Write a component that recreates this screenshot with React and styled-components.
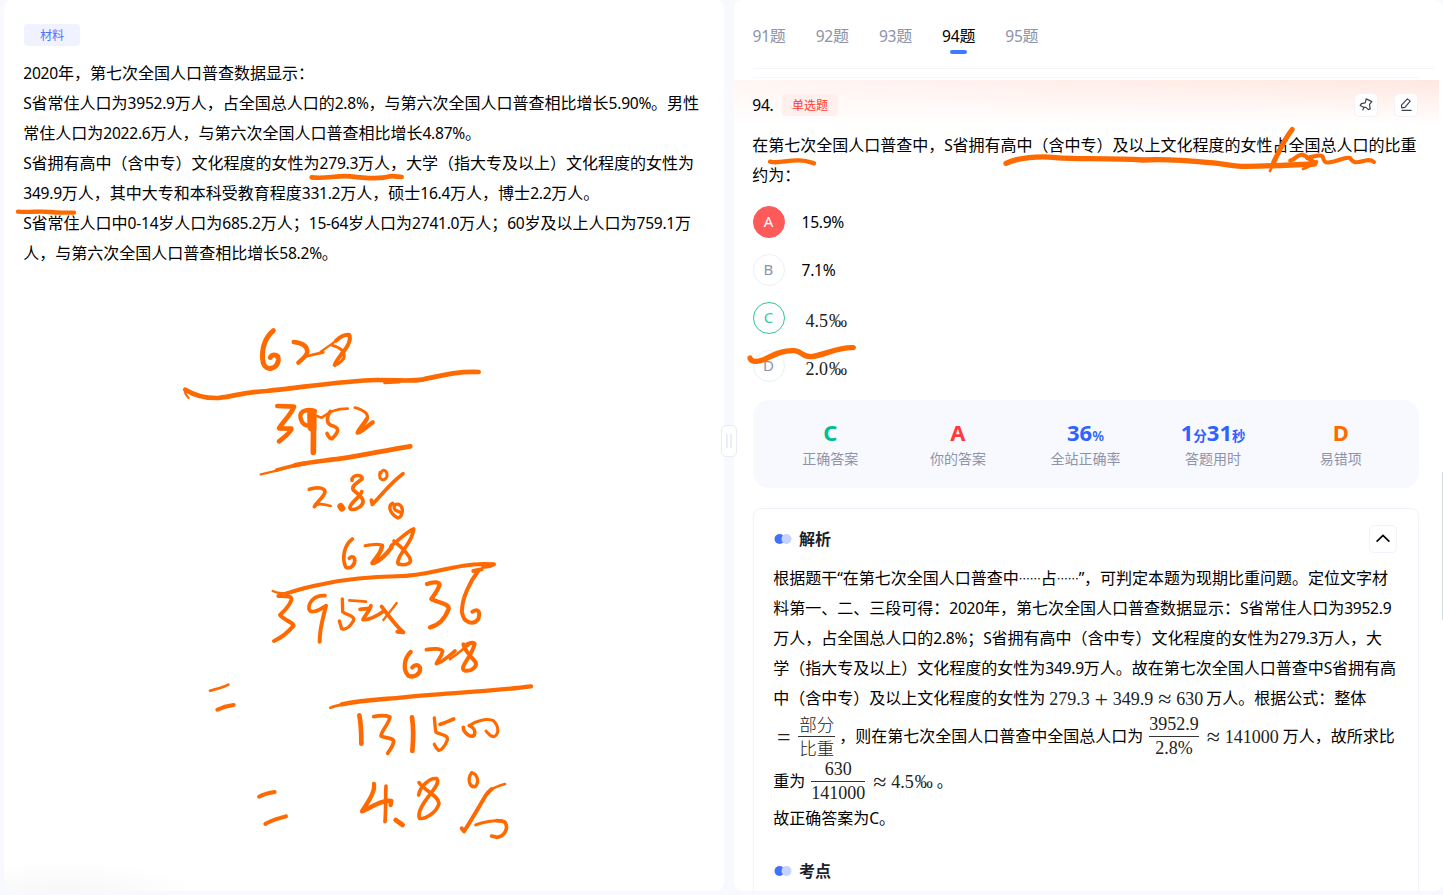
import React from "react";
import styled, { createGlobalStyle } from "styled-components";

const GlobalStyle = createGlobalStyle`
  * { box-sizing: border-box; }
  body {
    margin: 0;
    background: #f7f9fe;
    color: #000;
    font-family: "Noto Sans CJK SC", sans-serif;
    font-size: 16px;
    overflow: hidden;
  }
`;

const INK = "#ff6a00";

const Page = styled.main`
  position: relative;
  display: flex;
  width: 100vw;
  height: 895px;
  padding: 0 0 4px 4px;
  overflow: hidden;
`;

const Panel = styled.section`
  width: ${(p) => p.$width};
  flex: ${(p) => (p.$width ? "none" : 1)};
  height: 891px;
  background: #fff;
  border-radius: 8px;
  overflow: hidden;
`;

const Material = styled(Panel)`
  padding: 24px 20px;
  background: radial-gradient(ellipse 130px 30px at 60px 100%, #f7f7f8, #fff);
`;

const Tag = styled.span`
  display: flex;
  align-items: center;
  justify-content: center;
  width: 56px;
  height: 22px;
  border-radius: 4px;
  font-size: 12px;
  line-height: 22px;
  color: ${(p) => (p.$red ? "#ff3b30" : "#4476ff")};
  background: ${(p) => (p.$red ? "#fff0ed" : "#f0f3ff")};
`;

const Passage = styled.div`
  margin: ${(p) => p.$top || 0}px 0 0 -0.7px;
`;

const Line = styled.div`
  display: flex;
  align-items: center;
  height: ${(p) => p.$h || 30}px;
  line-height: 30px;
  white-space: pre;
`;

const Latin = styled.span`
  font-family: "Noto Sans", sans-serif;
  font-size: 0.975em;
  letter-spacing: -0.28px;
`;

const Dots = styled.span`
  font-size: 11px;
  font-weight: 500;
  vertical-align: 1px;
  line-height: 1;
`;

function Text({ children }) {
  const runs = children.split(/([\x20-\x7e“”]+|…+)/).filter(Boolean);
  return (
    <span>
      {runs.map((run, i) => {
        if (/^…/.test(run)) return <Dots key={i}>{run}</Dots>;
        if (/^[\x20-\x7e“”]/.test(run)) return <Latin key={i}>{run}</Latin>;
        return run;
      })}
    </span>
  );
}

const Splitter = styled.div`
  display: flex;
  align-items: center;
  justify-content: center;
  width: 10px;
  flex: none;
`;

const Grip = styled.div`
  z-index: 1;
  flex: none;
  display: flex;
  align-items: center;
  justify-content: center;
  gap: 2px;
  width: 16px;
  height: 32px;
  margin-top: -9px;
  border: 1px solid #e9ebf5;
  border-radius: 5px;
  background: #fff;
`;

const GripBar = styled.i`
  width: 2px;
  height: 14px;
  background: #eceef5;
`;

const Tabs = styled.nav`
  display: flex;
  gap: 30px;
  height: 69px;
  margin: 0 9px 0 18.6px;
  padding-top: 21px;
  border-bottom: 1px solid #f3f4fb;
`;

const Tab = styled.div`
  display: flex;
  flex-direction: column;
  align-items: center;
  width: 33.2px;
  line-height: 29px;
  color: ${(p) => (p.$active ? "#000" : "#8d94aa")};
  white-space: nowrap;

  &::after {
    content: "";
    width: 17px;
    height: 4px;
    margin-top: -1px;
    border-radius: 2px;
    background: ${(p) => (p.$active ? "#3f7bff" : "transparent")};
  }
`;

const Rule = styled.div`
  height: 1px;
  margin: 8px 24px 2px 19px;
  background: #f5f6fb;
`;

const Question = styled.div`
  margin-right: 4px;
  padding: 13px 20px 0 19px;
  background: linear-gradient(to bottom, rgba(255, 255, 255, 0), #fff 44px),
    linear-gradient(100deg, #fff6f3, #ffede9 45%, #ffe5dc);
`;

const QuestionHead = styled.header`
  display: flex;
  align-items: center;
  height: 24px;
`;

const Number = styled.span`
  width: 29.7px;
  margin-left: -0.7px;
  padding-bottom: 2px;
`;

const Tools = styled.div`
  display: flex;
  gap: 16px;
  margin: 0 1px 0 auto;
`;

const IconButton = styled.button`
  display: grid;
  place-items: center;
  width: ${(p) => p.$size || 24}px;
  height: ${(p) => p.$size || 24}px;
  padding: 0;
  border: 1px solid #f1f2fb;
  border-radius: 5px;
  background: #fff;
`;

const Options = styled.div`
  display: flex;
  flex-direction: column;
  gap: 16px;
  margin-top: 17px;
`;

const Option = styled.div`
  display: flex;
  align-items: center;
  gap: 16.5px;
  height: 32px;
  line-height: 28px;
`;

const OptionText = styled.div`
  padding-bottom: 2px;
`;

const tones = {
  wrong: ["#ff5a5a", "#fff", "#ff5a5a"],
  right: ["#fff", "#3cc8a3", "#2fc6a0"],
  plain: ["#fff", "#8d94aa", "#ebeff9"],
};

const Letter = styled.span`
  display: grid;
  place-items: center;
  width: 32px;
  height: 32px;
  padding: 0 1px 2px 0;
  border-radius: 50%;
  border: 1px solid ${(p) => tones[p.$tone][2]};
  background: ${(p) => tones[p.$tone][0]};
  color: ${(p) => tones[p.$tone][1]};
  font: 15px/28px "Noto Sans", sans-serif;
`;

const Formula = styled.span`
  display: inline-flex;
  align-items: center;
  font: 18px/24px "Liberation Serif", "Noto Sans CJK SC", serif;
  color: #222;
  padding-top: ${(p) => p.$drop ?? 2}px;
  margin: 0 ${(p) => p.$right ?? 3}px 0 ${(p) => p.$left ?? 4}px;
`;

const Op = styled.span`
  width: 14px;
  margin: 0 4.5px;
  text-align: center;
  font-size: 24px;
  line-height: 20px;
`;

const Permille = styled.span`
  width: 20px;
  padding-left: 1px;
`;

const Fraction = styled.span`
  display: inline-flex;
  flex-direction: column;
  align-items: stretch;
  text-align: center;
  line-height: 23px;
  margin: 0 ${(p) => p.$right ?? 3}px 0 ${(p) => p.$left ?? 0}px;
`;

const Numerator = styled.span`
  border-bottom: 1px solid #333;
`;

const Han = styled.span`
  display: block;
  height: 23px;
  padding: 0 1px;
  font-family: "Noto Sans CJK SC", sans-serif;
  font-weight: 300;
  font-size: 17.5px;
  line-height: 22px;
`;

const Stats = styled.div`
  display: grid;
  grid-template-columns: repeat(5, 1fr);
  height: 88px;
  margin-top: 18px;
  padding: 17px 14.5px 0 13.5px;
  border-radius: 16px;
  background: #f7f9fe;
`;

const Stat = styled.div`
  display: flex;
  flex-direction: column;
  align-items: center;
`;

const Value = styled.div`
  height: 30px;
  font: 700 22px/30px "Noto Sans", "Noto Sans CJK SC", sans-serif;
  color: ${(p) => p.$color};
`;

const Unit = styled.small`
  font-size: 13.5px;
  font-weight: 600;
  line-height: 1;
`;

const Label = styled.div`
  font-size: 14px;
  line-height: 22px;
  color: #8d94aa;
`;

const Card = styled.article`
  height: 420px;
  margin-top: 20px;
  padding: 16px 21px 0 20px;
  border: 1px solid #f1f2fb;
  border-radius: 8px;
`;

const CardHead = styled.header`
  display: flex;
  align-items: center;
  justify-content: space-between;
  height: 28px;
  margin-top: ${(p) => p.$top || 0}px;
`;

const Title = styled.h3`
  display: flex;
  align-items: center;
  gap: 7px;
  margin: 0;
  font-size: 16px;
  line-height: 26px;
  font-weight: 700;
  color: #1b1f2b;
`;

const TitleText = styled.span`
  padding-bottom: 2px;
`;

const Scrollbar = styled.div`
  position: absolute;
  right: 0;
  top: 472px;
  width: 1px;
  height: 148px;
  background: #d9dbe3;
`;

const InkLayer = styled.svg`
  position: absolute;
  inset: 0;
  pointer-events: none;
  z-index: 2;
`;

function PinIcon() {
  return (
    <svg width="14" height="14" viewBox="0 0 14 14" fill="none" stroke="#3f434e" strokeWidth="1.2" strokeLinejoin="round" strokeLinecap="round">
      <path d="M7.2 0.9 L12.8 3.6 L10.5 6.4 L11.2 10.9 L9.4 11.6 L6.9 9.4 L4.5 9.3 L1.2 7.4 L2.4 5.6 L6.2 4.8 Z" />
      <path d="M4.9 9.4 L3.8 12" />
    </svg>
  );
}

function PencilIcon() {
  return (
    <svg width="14" height="14" viewBox="0 0 14 14" fill="none" stroke="#3f434e" strokeWidth="1.2" strokeLinejoin="round" strokeLinecap="round">
      <path d="M8.4 0.9 L11.2 3.1 L5.9 9.4 L2.7 9.8 L2.5 7.2 Z" />
      <path d="M3 12.3 H12.2" />
    </svg>
  );
}

function TitleDots() {
  return (
    <svg width="18" height="10" viewBox="0 0 18 10">
      <circle cx="5.5" cy="5" r="5" fill="#4371ff" />
      <circle cx="12.5" cy="5" r="5" fill="#c6d3ff" />
    </svg>
  );
}

const strokes = [
  {
    at: [170, 310],
    paths: [
      [15, "M310 62C282 85 272 125 280 160C288 185 322 178 325 150C326 132 308 132 301 142"],
      [13, "M385 158C395 150 408 138 412 127C413 110 400 99 371 96"],
      [8, "M385 158C395 140 420 135 460 127"],
      [7, "M452 125C475 110 490 98 505 88"],
      [12, "M498 92C512 80 525 72 538 75C544 90 532 112 515 132C505 145 498 155 494 165"],
      [9, "M487 106C510 112 528 125 521 145C512 158 505 162 495 165"],
      [6, "M56 264C46 254 42 246 46 238"],
      [14, "M46 239C75 257 105 265 145 264C200 258 220 246 290 243C400 232 520 212 620 210C700 210 720 215 760 208C820 195 860 184 926 186"],
      [7, "M643 219L688 217"],
      [14, "M322 288L372 290C365 310 340 335 327 355L364 356C364 365 345 380 327 394"],
      [13, "M435 303C415 297 390 300 391 320C395 345 410 350 425 345"],
      [27, "M425 312L426 352"],
      [17, "M431 305L430 427"],
      [8, "M440 318L455 323C480 303 500 296 533 296"],
      [11, "M481 304C470 320 468 340 483 346C510 353 508 365 486 386C477 386 473 375 471 370"],
      [9, "M555 293C580 300 600 312 590 330"],
      [13, "M590 328C580 345 565 360 563 368C580 364 595 345 608 337"],
      [7, "M272 493C330 482 360 468 410 462"],
      [11, "M320 480C350 471 380 464 410 459"],
      [14, "M375 466C420 455 460 453 510 446C580 436 650 420 721 409"],
      [11, "M418 538C440 530 465 533 465 546C460 565 440 575 433 590"],
      [8, "M433 590C440 578 460 582 482 588"],
      [20, "M512 589L516 595"],
      [11, "M546 511C545 493 580 492 576 507C560 520 543 528 550 540C575 560 590 575 570 590C550 603 535 600 541 588C550 570 572 560 575 545"],
      [9, "M630 487C625 510 642 517 651 500C653 478 635 476 633 490"],
      [11, "M699 491C660 520 635 555 607 583L604 570"],
      [10, "M668 580C652 588 660 612 684 624C700 618 702 590 686 583C674 580 668 590 676 600L688 606"],
    ],
  },
  {
    at: [190, 515],
    paths: [
      [11, "M487 72C462 90 455 130 467 156C480 165 497 150 494 132C490 122 482 125 478 130"],
      [9, "M525 92C550 88 570 85 578 92"],
      [13, "M576 92C575 115 555 130 547 144C565 142 590 118 605 97"],
      [11, "M603 93C625 77 650 50 671 42C668 75 645 95 637 112C625 130 620 145 626 147"],
      [11, "M612 78C625 90 640 100 650 115C663 130 665 142 655 146C645 150 635 150 626 147"],
      [7, "M248 228C275 242 310 230 350 220"],
      [12, "M290 235C330 222 360 214 400 207C480 190 540 185 620 184C700 183 740 165 820 152C850 147 880 146 912 148C900 155 890 156 880 155"],
      [12, "M265 243C290 242 308 244 304 255C298 275 280 290 270 300C285 318 310 322 311 332C300 345 275 368 252 378"],
      [11, "M405 242C375 240 355 260 357 282C362 298 385 287 404 275"],
      [12, "M408 272C402 300 388 340 389 380"],
      [10, "M457 252L458 290C470 300 497 303 490 318C478 338 465 345 455 341L448 318"],
      [8, "M478 256L528 260"],
      [11, "M510 283C530 280 540 283 543 272C540 290 520 305 519 314C540 316 565 300 582 288"],
      [12, "M575 275C590 295 620 335 640 352L622 350"],
      [7, "M620 264C605 285 595 295 580 315"],
      [13, "M711 207C730 200 752 200 748 212C742 230 732 240 724 252C745 264 778 265 776 282C765 310 750 330 720 337"],
      [12, "M875 163L850 168"],
      [12, "M866 166C840 200 815 250 816 290C820 325 850 332 865 312C872 290 865 280 847 290"],
      [13, "M662 411C642 430 638 465 655 482C675 490 693 475 690 458C685 448 675 448 667 457"],
      [11, "M709 404C730 400 755 400 758 409C755 425 742 435 739 446C755 443 775 425 795 408"],
      [8, "M780 432C800 420 820 400 835 392"],
      [12, "M825 393C835 383 850 381 854 386C850 405 840 420 835 428C822 448 812 463 825 467C845 470 862 455 857 442C845 425 825 410 820 388"],
    ],
  },
  {
    at: [190, 670],
    paths: [
      [8, "M421 113C440 105 470 102 500 95"],
      [13, "M455 103C520 90 580 88 640 82C760 70 900 65 1023 49"],
      [8, "M60 62C80 56 100 53 115 44"],
      [12, "M82 119C100 110 115 107 131 105"],
      [14, "M508 136C513 160 514 190 514 221"],
      [11, "M551 140C570 136 590 137 600 141C595 165 575 180 573 198C590 206 613 203 611 216C607 235 598 240 593 250"],
      [14, "M666 142C672 180 670 210 667 243"],
      [10, "M733 144C735 160 735 175 738 187C755 195 775 195 772 210C765 230 752 243 746 241C740 237 736 230 733 223"],
      [11, "M750 163C765 160 778 152 791 147"],
      [11, "M820 172C820 190 845 205 853 195C858 183 850 172 838 167"],
      [9, "M838 167C860 150 890 145 910 152C928 170 927 193 912 200C900 200 895 190 888 183"],
      [12, "M207 380C222 372 240 368 254 366"],
      [12, "M226 462C245 450 265 446 288 439"],
      [13, "M552 342C556 365 535 395 516 424C545 412 575 388 604 393L602 405"],
      [11, "M588 348C586 385 588 420 585 455"],
      [14, "M617 450L638 465"],
      [11, "M687 338C700 360 745 375 747 400C740 430 700 450 688 444C682 425 700 400 715 380C735 355 750 335 740 326C720 322 690 350 686 375"],
      [10, "M845 308C830 330 840 352 855 350C870 337 862 312 845 308"],
      [8, "M945 342C920 350 900 355 885 378"],
      [12, "M905 357C895 366 892 369 888 375C870 405 845 450 822 484L815 475"],
      [9, "M857 465C880 455 920 448 945 456"],
      [11, "M920 452C930 452 940 453 945 457C957 475 943 500 920 502L905 498"],
    ],
  },
  {
    at: [715, 290],
    paths: [[16, "M105 204C108 215 125 218 148 208C185 190 205 181 238 182C262 184 260 201 288 200C330 195 370 170 415 173"]],
  },
  {
    at: [730, 0],
    paths: [[13, "M120 485C145 492 170 480 205 481C225 480 240 486 252 490"]],
  },
  {
    at: [0, 0],
    paths: [
      [14, "M935 532C975 538 1010 525 1050 529C1090 534 1140 538 1170 529C1185 527 1195 531 1205 531"],
      [13, "M54 635C90 638 120 632 150 636C180 640 200 637 222 638"],
    ],
  },
  {
    at: [1083, 0],
    paths: [
      [16, "M-231 490C-195 472 -130 468 -90 472C-40 478 60 474 180 480C260 476 320 482 380 488C430 492 460 500 490 499C560 498 630 495 695 492"],
      [8, "M660 507C680 500 690 495 702 484"],
      [15, "M628 388C605 415 590 450 572 487"],
      [8, "M580 470L561 513"],
      [13, "M622 482C640 478 636 466 658 464C675 468 680 484 698 488"],
      [12, "M672 474C695 470 708 462 719 469C722 482 725 490 740 487C765 484 785 470 801 474C812 494 830 485 845 482C860 478 868 482 873 486"],
    ],
  },
];

function Ink() {
  return (
    <InkLayer width="1443" height="895" viewBox="0 0 1443 895" fill="none" stroke={INK} strokeLinecap="round" strokeLinejoin="round">
      {strokes.map((group, g) => (
        <g key={g} transform={`translate(${group.at[0]} ${group.at[1]}) scale(0.33333)`}>
          {group.paths.map(([w, d], i) => (
            <path key={i} d={d} strokeWidth={w} />
          ))}
        </g>
      ))}
    </InkLayer>
  );
}

const material = [
  "2020年，第七次全国人口普查数据显示：",
  "S省常住人口为3952.9万人，占全国总人口的2.8%，与第六次全国人口普查相比增长5.90%。男性",
  "常住人口为2022.6万人，与第六次全国人口普查相比增长4.87%。",
  "S省拥有高中（含中专）文化程度的女性为279.3万人，大学（指大专及以上）文化程度的女性为",
  "349.9万人，其中大专和本科受教育程度331.2万人，硕士16.4万人，博士2.2万人。",
  "S省常住人口中0-14岁人口为685.2万人；15-64岁人口为2741.0万人；60岁及以上人口为759.1万",
  "人，与第六次全国人口普查相比增长58.2%。",
];

const analysis = [
  "根据题干“在第七次全国人口普查中……占……”，可判定本题为现期比重问题。定位文字材",
  "料第一、二、三段可得：2020年，第七次全国人口普查数据显示：S省常住人口为3952.9",
  "万人，占全国总人口的2.8%；S省拥有高中（含中专）文化程度的女性为279.3万人，大",
  "学（指大专及以上）文化程度的女性为349.9万人。故在第七次全国人口普查中S省拥有高",
];

export default function App() {
  return (
    <Page>
      <GlobalStyle />
      <Material $width="720px">
        <Tag>材料</Tag>
        <Passage $top={11}>
          {material.map((t) => (
            <Line key={t}><Text>{t}</Text></Line>
          ))}
        </Passage>
      </Material>
      <Splitter>
        <Grip><GripBar /><GripBar /></Grip>
      </Splitter>
      <Panel>
        <Tabs>
          {[91, 92, 93, 94, 95].map((n) => (
            <Tab key={n} $active={n === 94}><Text>{`${n}题`}</Text></Tab>
          ))}
        </Tabs>
        <Rule />
        <Question>
          <QuestionHead>
            <Number><Text>94.</Text></Number>
            <Tag $red>单选题</Tag>
            <Tools>
              <IconButton aria-label="pin"><PinIcon /></IconButton>
              <IconButton aria-label="note"><PencilIcon /></IconButton>
            </Tools>
          </QuestionHead>
          <Passage $top={12}>
            <Line><Text>在第七次全国人口普查中，S省拥有高中（含中专）及以上文化程度的女性占全国总人口的比重</Text></Line>
            <Line><Text>约为：</Text></Line>
          </Passage>
          <Options>
            <Option><Letter $tone="wrong">A</Letter><OptionText><Text>15.9%</Text></OptionText></Option>
            <Option><Letter $tone="plain">B</Letter><OptionText><Text>7.1%</Text></OptionText></Option>
            <Option><Letter $tone="right">C</Letter><Formula $drop={5}>4.5<Permille>‰</Permille></Formula></Option>
            <Option><Letter $tone="plain">D</Letter><Formula $drop={5}>2.0<Permille>‰</Permille></Formula></Option>
          </Options>
          <Stats>
            <Stat><Value $color="#00c08b">C</Value><Label>正确答案</Label></Stat>
            <Stat><Value $color="#ff3b3b">A</Value><Label>你的答案</Label></Stat>
            <Stat><Value $color="#2f62ff">36<Unit>%</Unit></Value><Label>全站正确率</Label></Stat>
            <Stat><Value $color="#2f62ff">1<Unit>分</Unit>31<Unit>秒</Unit></Value><Label>答题用时</Label></Stat>
            <Stat><Value $color="#ff6a00">D</Value><Label>易错项</Label></Stat>
          </Stats>
          <Card>
            <CardHead>
              <Title><TitleDots /><TitleText>解析</TitleText></Title>
              <IconButton $size={28} aria-label="collapse">
                <svg width="16" height="16" viewBox="0 0 16 16" fill="none" stroke="#000" strokeWidth="1.7">
                  <path d="M1.6 10.6L8 4.4L14.4 10.6" />
                </svg>
              </IconButton>
            </CardHead>
            <Passage $top={9}>
              {analysis.map((t) => (
                <Line key={t}><Text>{t}</Text></Line>
              ))}
              <Line>
                <Text>中（含中专）及以上文化程度的女性为</Text>
                <Formula $drop={3}>279.3<Op>+</Op>349.9<Op>≈</Op>630</Formula>
                <Text>万人。根据公式：整体</Text>
              </Line>
              <Line $h={46}>
                <Formula $drop={3} $left={-1} $right={4}>
                  <Op>=</Op>
                  <Fraction $left={3} $right={0}><Numerator><Han>部分</Han></Numerator><Han>比重</Han></Fraction>
                </Formula>
                <Text>，则在第七次全国人口普查中全国总人口为</Text>
                <Formula $drop={3} $left={6} $right={4}>
                  <Fraction><Numerator>3952.9</Numerator>2.8%</Fraction>
                  <Op>≈</Op>141000
                </Formula>
                <Text>万人，故所求比</Text>
              </Line>
              <Line $h={44}>
                <Text>重为</Text>
                <Formula $drop={3} $left={6}>
                  <Fraction><Numerator>630</Numerator>141000</Fraction>
                  <Op>≈</Op>4.5<Permille>‰</Permille>
                </Formula>
                <Text>。</Text>
              </Line>
              <Line><Text>故正确答案为C。</Text></Line>
            </Passage>
            <CardHead $top={25}>
              <Title><TitleDots /><TitleText>考点</TitleText></Title>
            </CardHead>
          </Card>
        </Question>
      </Panel>
      <Scrollbar />
      <Ink />
    </Page>
  );
}
